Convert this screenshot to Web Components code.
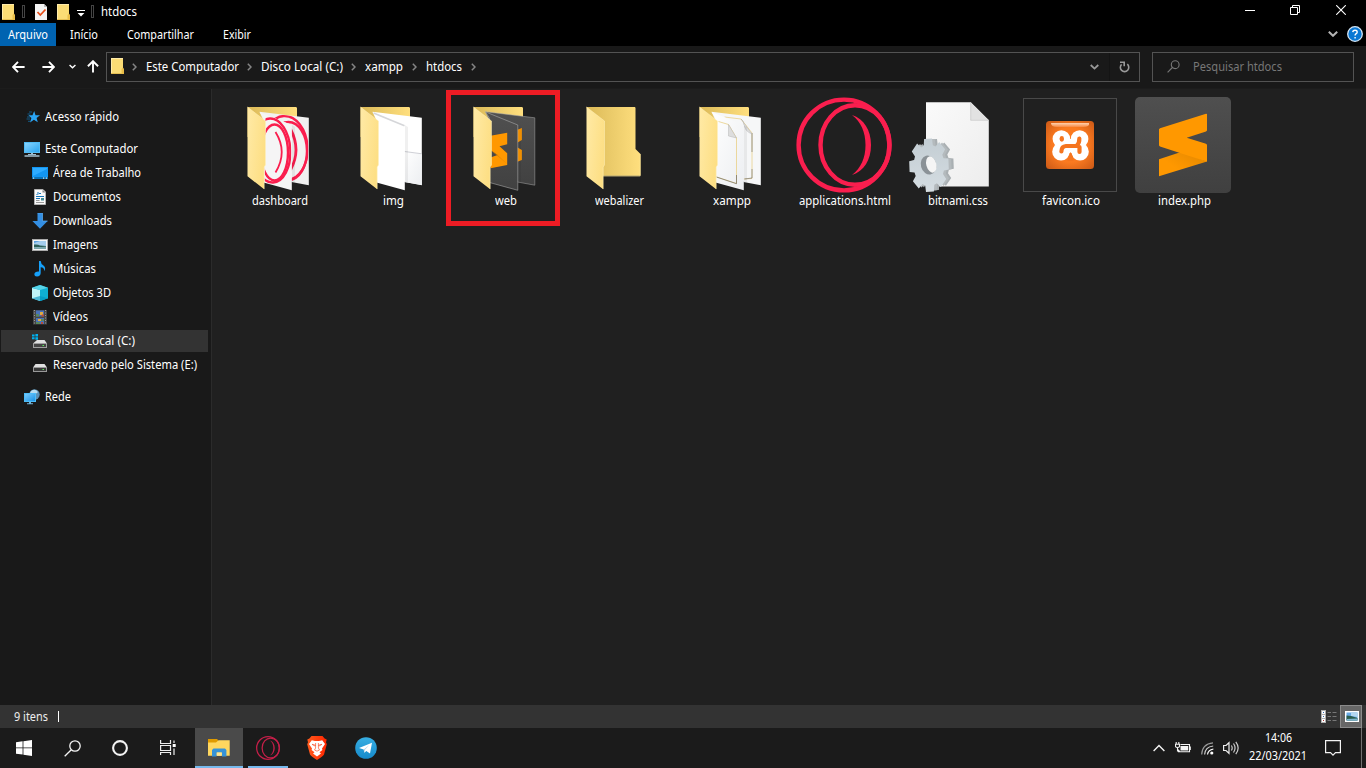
<!DOCTYPE html>
<html lang="pt-BR">
<head>
<meta charset="utf-8">
<title>htdocs</title>
<style>
html,body{margin:0;height:100%;background:#202020;overflow:hidden}
body{font-family:"Noto Sans","Open Sans",sans-serif;font-size:12px;color:#fff}
</style>
</head>
<body>
<desktop-screen></desktop-screen>
<script>
const define = (name, html, setup) => customElements.define(name, class extends HTMLElement {
  connectedCallback() {
    if (this.shadowRoot) return;
    const root = this.attachShadow({mode: 'open'});
    root.innerHTML = typeof html === 'function' ? html(this) : html;
    if (setup) setup(this, root);
  }
});

/* A single line of text condensed to an exact advance width. */
define('text-run', el => `<style>:host{display:block;white-space:nowrap;line-height:16px;height:16px;flex:none;width:${el.getAttribute('w')}px}span{display:inline-block;transform-origin:0 50%}</style><span>${el.getAttribute('t')}</span>`,
  (el, root) => {
    const span = root.querySelector('span');
    const scale = Number(el.getAttribute('w')) / span.getBoundingClientRect().width;
    span.style.transform = `scaleX(${scale.toFixed(4)})`;
  });

const flapDefs = `<defs><linearGradient id="f" x2="1" y2=".4"><stop stop-color="#ffeaa6"/><stop offset="1" stop-color="#fddf85"/></linearGradient><linearGradient id="k" x2="1" y2="0"><stop stop-color="#dcb956"/><stop offset=".4" stop-color="#e9c968"/><stop offset="1" stop-color="#ffdf7e"/></linearGradient><linearGradient id="p" x2="1" y2="1"><stop stop-color="#fff"/><stop offset="1" stop-color="#eceef1"/></linearGradient><linearGradient id="d" x2="0" y2="1"><stop stop-color="#505050"/><stop offset="1" stop-color="#414141"/></linearGradient><clipPath id="cf"><path d="M35 17L61 28V93L34 86Z"/></clipPath><clipPath id="cb"><path d="M29 15L78 21V88L61 85V28Z"/></clipPath></defs><g transform="translate(-.5 0)">`;
const flap = '<path d="M17 10L35 24V68L33.7 70V92.3L17 79.3Z" fill="url(#f)"/><path d="M17 10L35 24V68L33.7 70V92" fill="none" stroke="#fff0bd" stroke-width=".5"/></g>';
const backTop = '<path d="M17 10H65.7L66.5 11V40H17Z" fill="url(#k)"/>';
const pages = (fill, extra = '') => `<path d="M29 14.7L78.3 20.8V88.2L61 85Z" fill="${fill}" ${extra}/>`;
const front = (fill, extra = '') => `<path d="M29 14.9L61.3 28V93.3L33 85.5V21Z" fill="${fill}" ${extra}/>`;
const foldShade = '<path d="M61.3 28L64.5 30V85.6L61.3 85Z" fill="#000" opacity=".06"/>';
const operaPaths = c => `<g fill="none" stroke="${c}" stroke-width="4.4"><circle cx="48" cy="48" r="45.4"/><ellipse cx="59" cy="48" rx="34.5" ry="39.8"/></g><path d="M56 18C68 22 75 33 75 48S68 74 56 78C65 71 69.5 61 69.5 48S65 25 56 18Z" fill="${c}"/>`;

function gear(cx, cy, rx, ry) {
  const pts = [];
  for (let i = 0; i < 8; i++) {
    const a = i * Math.PI / 4 - 1.62;
    for (const [da, r] of [[-.3, .77], [-.2, 1], [.2, 1], [.3, .77]])
      pts.push((cx + rx * r * Math.cos(a + da)).toFixed(1) + ',' + (cy + ry * r * Math.sin(a + da)).toFixed(1));
  }
  return 'M' + pts.join('L') + 'Z';
}

/* [viewBox width, height, markup] */
const ICONS = {
  dashboard: [96, 96, flapDefs + backTop + pages('#f1f1f1') +
    '<g clip-path="url(#cb)" fill="none" stroke="#fa1e4e" stroke-width="2.4"><ellipse cx="55" cy="51" rx="22" ry="32" transform="rotate(-3 55 51)"/><ellipse cx="58" cy="54" rx="18.5" ry="29"/><path d="M60 32Q71 53 60 73" stroke-width="2.8"/></g>' + foldShade + front('#f5f5f5') +
    '<g clip-path="url(#cf)" fill="none" stroke="#fa1e4e" stroke-width="2.4"><ellipse cx="41" cy="53.5" rx="18.8" ry="32" transform="rotate(-3 41 53.5)"/><ellipse cx="44" cy="55.5" rx="13.5" ry="28"/><path d="M45 35Q57.5 55 45 75.5" stroke-width="1.8"/></g>' + flap],
  img: [96, 96, flapDefs + backTop + pages('#fff') + '<path d="M61 54.7L78.3 57V88L61 85Z" fill="url(#p)"/><path d="M61 54.5L78.3 56.8" stroke="#cfd0d6" stroke-width="1"/>' + foldShade + front('#fff') + '<path d="M30 16L61 28.8" stroke="#d5d6d9" stroke-width="1.6"/>' + flap],
  web: [96, 96, flapDefs + backTop + pages('url(#d)', 'stroke="#aaa" stroke-width=".5"') + '<path d="M60.3 33L65.3 31V43L60.3 46ZM60.3 50L65.3 53V63L60.3 65Z" fill="#ff9800"/>' + foldShade + front('url(#d)', 'stroke="#bbb" stroke-width=".5"') + '<path d="M34 38.7L50.7 35.7V47.3L43 49.3L50.7 56.3V68L34 71.3V60.5L41 58L34 53Z" fill="#ff9800"/><path d="M34 53L50.7 67L41 58Z" fill="#d98000"/>' + flap],
  webalizer: [96, 96, flapDefs + '<path d="M17 10H65.5L66 11V52L71 57V78L70.5 78.8H30Z" fill="url(#k)"/><path d="M33.5 79H70.7V57" fill="none" stroke="#fbe59b" stroke-width=".7"/>' + flap],
  xampp: [96, 96, flapDefs + backTop + pages('#f6f7f8') + '<path d="M42 20L58.5 22L69.5 36V81.5L61 82" fill="none" stroke="#ead18b" stroke-width=".8"/><path d="M69.5 36V55M69.5 72V81L62 82" fill="none" stroke="#666" stroke-width=".6"/><path d="M60.5 24Q62 35 69.5 37L58.5 22Z" fill="#ddd" stroke="#aaa" stroke-width=".4"/>' + foldShade + front('url(#p)') + '<path d="M36 24.5L46 27.5L54 41V86.5L34 80" fill="none" stroke="#e9cf86" stroke-width=".8"/><path d="M54 78V86.7L34 80" fill="none" stroke="#555" stroke-width=".6"/><path d="M46 27.5V39L54 41Z" fill="#ddd" stroke="#aaa" stroke-width=".4"/>' + flap],
  opera: [96, 96, operaPaths('#fa1e4e')],
  css: [96, 96, `<defs><linearGradient id="p" x2="1" y2="1"><stop stop-color="#fafafa"/><stop offset="1" stop-color="#ededed"/></linearGradient><linearGradient id="g" x2="0" y2="1"><stop stop-color="#c3cdd3"/><stop offset="1" stop-color="#d5dde2"/></linearGradient></defs><path d="M17 5.3H61.7L79.8 23.3V89.4H17Z" fill="url(#p)"/><path d="M61.7 5.3V23.3H79.8Z" fill="#e2e2e2"/><path d="M61.7 5.3V23.3H79.8" fill="none" stroke="#c9c9c9" stroke-width=".7"/>
    <path d="${gear(25, 67.8, 20, 26)}" fill="#a9afb2"/><path d="${gear(22.8, 68, 20, 26)}" fill="#b4babd"/><path d="${gear(20, 68.3, 20, 27)}" fill="url(#g)"/><ellipse cx="19.5" cy="68" rx="7.6" ry="9.7" fill="#8b9297" transform="rotate(-15 19.5 68)"/><ellipse cx="22.3" cy="67.5" rx="5" ry="8.3" fill="#f5f5f5" transform="rotate(-15 22.3 67.5)"/>`],
  favicon: [96, 96, `<defs><radialGradient id="r" r=".72"><stop offset=".5" stop-color="#fb7a20"/><stop offset="1" stop-color="#c85716"/></radialGradient><linearGradient id="s" x2="0" y2="1"><stop stop-color="#ffd1b0"/><stop offset="1" stop-color="#f98a43"/></linearGradient></defs><rect x="1.5" y="1.5" width="93" height="93" fill="none" stroke="#494949"/><rect x="24" y="24" width="48" height="48" rx="3.5" fill="url(#r)"/><path d="M29 26H67Q68 30 61 30H35Q29 30 29 26Z" fill="url(#s)"/>
    <g fill="#fff"><circle cx="39.4" cy="42" r="8.8"/><circle cx="39" cy="54.8" r="8.8"/><circle cx="57.6" cy="42" r="8.8"/><circle cx="58" cy="54.8" r="8.8"/><path d="M36 42H61V56H36Z"/></g><path d="M48.5 55Q46.5 58 45.5 64H51.5Q51 58 48.5 55Z" fill="#f5751f"/><g fill="none" stroke="#f5751f" stroke-width="4.2" stroke-linecap="round" stroke-linejoin="round"><path d="M39.8 41.2V42.6"/><path d="M39.4 54.5Q39.5 49.3 44 49H54.5Q57.7 46 57.3 41.5M57.5 50V55"/></g>`],
  sublime: [96, 96, `<defs><linearGradient id="d" x2="0" y2="1"><stop stop-color="#4f4f4f"/><stop offset="1" stop-color="#404040"/></linearGradient><linearGradient id="o" x1="1" y1=".1" x2=".3" y2=".6"><stop stop-color="#e48800"/><stop offset="1" stop-color="#ff9800"/></linearGradient></defs><rect width="96" height="96" rx="5" fill="url(#d)"/><path d="M24 62.3L46 55L72 64.5L24 79.3Z" fill="url(#o)"/><path d="M24 32.2L25 31.2L71 16.7L72 17V33.5L71 34.5L51.7 40.7L71 46.7L72 47.7V64.7L25 49.4L24 48.4Z" fill="#ff9800"/>`],
  folder: [13, 16, '<path d="M0 0H12V10L13 11.5V16H0Z" fill="#fbdc75"/><path d="M10.5 15.5V11L12 9.5L13 11.5V16H10.5Z" fill="#e9bd48"/><path d="M0 .5H12M.5 0V16" stroke="#ffebaa" fill="none"/><path d="M0 15.5H11" stroke="#e5bf53"/>'],
  check: [12, 16, '<path d="M0 0H9L12 3V16H0Z" fill="#f4f4f4"/><path d="M9 0V3H12Z" fill="#bbb"/><path d="M2.5 8L5.3 11L10.5 5.5" fill="none" stroke="#e8501c" stroke-width="1.8"/>'],
  qat: [8, 7, '<path d="M0 .5H8" stroke="#fff"/><path d="M.6 3H7.4L4 6.5Z" fill="#fff"/>'],
  grip: [3, 13, '<rect x=".5" y=".5" width="2" height="12" fill="none" stroke="#454545"/>'],
  min: [10, 10, '<path d="M0 5.5H10" stroke="#fff"/>'],
  restore: [10, 10, '<path d="M.5 2.5H7.5V9.5H.5ZM2.5 2.5V.5H9.5V7.5H7.5" fill="none" stroke="#fff"/>'],
  close: [10, 10, '<path d="M.2 .2L9.8 9.8M9.8 .2L.2 9.8" stroke="#fff" stroke-width="1.1"/>'],
  down: [10, 6, '<path d="M.8 .8L5 4.8L9.2 .8" fill="none" stroke="currentColor" stroke-width="2"/>'],
  help: [16, 16, '<circle cx="8" cy="8" r="7.3" fill="#0a78d4" stroke="#d5e6f5" stroke-width="1.3"/><path d="M5.8 6.1Q5.9 4.2 8 4.2T10.2 6Q10.2 7.2 8.9 7.9Q8.1 8.5 8.1 9.5M8.1 11V12.5" fill="none" stroke="#fff" stroke-width="1.4"/>'],
  back: [13, 12, '<path d="M12.6 6H1M6 .9L1 6L6 11.1" fill="none" stroke="#fff" stroke-width="1.9"/>'],
  fwd: [13, 12, '<path d="M.4 6H12M7 .9L12 6L7 11.1" fill="none" stroke="#fff" stroke-width="1.9"/>'],
  up: [12, 13, '<path d="M6 12.6V1.2M.9 6.2L6 1.2L11.1 6.2" fill="none" stroke="#fff" stroke-width="1.9"/>'],
  crumb: [5, 8, '<path d="M.8 .8L4 4L.8 7.2" fill="none" stroke="#858585" stroke-width="1.5"/>'],
  refresh: [11, 12, '<path d="M8.3 3.2A4.2 4.2 0 1 1 2.6 3.4M1 1.2H5.2V5.2" fill="none" stroke="#999" stroke-width="1.6"/>'],
  glass: [13, 13, '<circle cx="8.2" cy="4.7" r="3.9" fill="none" stroke="#777" stroke-width="1.1"/><path d="M5.4 7.5L.6 12.4" stroke="#777" stroke-width="1.1"/>'],
  star: [16, 16, '<path d="M10.2 2L11.5 6.3H16L12.6 9L13.8 13.2L9.9 10.8L6 13.6L7.4 9L4.4 6.3H8.5Z" fill="#2aa5f5"/><path d="M5 3H8M3.5 5H6.5M3 8H6M2.5 10H6M4 12.3H6" stroke="#135b88" stroke-width="1"/>'],
  pc: [16, 16, '<defs><linearGradient id="b" x2="1" y2="1"><stop stop-color="#8bd6ff"/><stop offset="1" stop-color="#27a3ef"/></linearGradient></defs><rect x=".5" y="1.5" width="15" height="10" fill="url(#b)" stroke="#52bcf5"/><path d="M7 12H9V13H12V14H4V13H7Z" fill="#9dbccf"/><path d="M.5 15H15.5" stroke="#a6c2d2" stroke-width="1.5"/>'],
  desk: [16, 16, '<rect y="2" width="16" height="12" fill="#1296f3"/><path d="M1 11L15 4V3H1Z" fill="#2eabff"/><path d="M0 13H16" stroke="#08649e" stroke-width="1.4"/><path d="M1 13.1H2.2M11 13.1H12.2M13.8 13.1H15" stroke="#fff"/>'],
  doc: [16, 16, '<path d="M2.5 .5H11L13.5 3V15.5H2.5Z" fill="#fafafa" stroke="#b3b3b3"/><path d="M10.5 1V3.5H13.5Z" fill="#888"/><path d="M4.5 5.5H5.5M6 3V5.5M7 4.5H9M4 7.5H12M4 9.5H8" stroke="#1475ba"/><path d="M9 9H12V11.5H9Z" fill="#438b93"/><path d="M4 11.5H7.5M4 13.5H12" stroke="#999"/>'],
  dl: [16, 16, '<path d="M5.5 0H10.5V8H15.6L8 15.8L.4 8H5.5Z" fill="#348fe3"/><path d="M5.5 0H10.5V8H15.6" fill="none" stroke="#5cb0f5" stroke-width=".7"/>'],
  pic: [16, 16, '<rect x=".5" y="2.5" width="15" height="11" fill="#f5f5f5" stroke="#aaa"/><rect x="2" y="4" width="12" height="8" fill="#a5cdec"/><path d="M2 4H8L2 6Z" fill="#5b9fde"/><path d="M2 7.5Q6 7 8 8.5L14 9V10H2Z" fill="#2c5f57"/><path d="M2 10Q8 10.5 14 9.5V12H2Z" fill="#7ba6aa"/>'],
  music: [16, 16, '<path d="M7 0H8.7Q9 3.4 11.5 4.6Q14.4 6.8 12.2 10.2Q12.4 6.5 8.7 6.3V12Q8.5 15.4 5 15.6Q2.3 15.3 2.3 13.2Q2.8 10.2 7 10.5Z" fill="#16a0f9"/>'],
  cube: [16, 16, '<path d="M0 2.7L8 0L16 2.7V13.3L8 16L0 13.3Z" fill="#19a9cc"/><path d="M0 3L8 5V16L0 13.3Z" fill="#bff3f7"/><path d="M16 3L8 5V16L16 13.3Z" fill="#0eaed3"/><path d="M0 2.7L8 0L16 2.7L8 5Z" fill="#57d4e8"/><path d="M8 11L0 13.3L8 16L16 13.3Z" fill="#008fbc" opacity=".6"/>'],
  film: [16, 16, '<rect x="1" y="1" width="14" height="14.5" fill="#474747"/><path d="M2.5 1V16M13.5 1V16" stroke="#999" stroke-dasharray="1 1.5"/><rect x="4" y="1.5" width="8" height="6" fill="#4971b9"/><rect x="4" y="9" width="8" height="6" fill="#4971b9"/><path d="M4 5H7V7.5H4M4 13H8V15H4M9 10H12V12H9" fill="#58865b"/><path d="M8 3H11V6H8M6 10H9V12H6" fill="#e0aa42"/><path d="M10 5.5H12V7.5H9M9 13H11V15H9" fill="#b54c39"/>'],
  disk: [16, 16, '<path d="M3.5 7H12.5L15 10.5H1Z" fill="#e0e0e0"/><rect x="1" y="10" width="14" height="5" fill="#989898"/><rect x="2" y="11" width="12" height="3" fill="#383838"/><path d="M10.5 12.5H12" stroke="#59ef58" stroke-width="1.2"/>'],
  diskc: [16, 16, '<path d="M5 7H12.5L15 10.5H1Z" fill="#e0e0e0"/><rect x="1" y="10" width="14" height="5" fill="#a0a0a0"/><rect x="2" y="11" width="12" height="3" fill="#454545"/><path d="M10.5 12.5H12" stroke="#59ef58" stroke-width="1.2"/><path d="M0 1.5H2.6V3.5H0ZM3.4 1H6V3.5H3.4ZM0 4.3H2.6V6.3H0ZM3.4 4.3H6V6.8H3.4Z" fill="#00b2f1"/>'],
  net: [16, 16, '<defs><linearGradient id="b" x2="1" y2="1"><stop stop-color="#7dceff"/><stop offset="1" stop-color="#168fe2"/></linearGradient></defs><circle cx="10.5" cy="5.5" r="5.2" fill="#5c91b6"/><path d="M7 2Q11 -1 14 3Q12 6 9 4Q7 6 6 4Z" fill="#b9dcef"/><rect x=".5" y="4.5" width="11" height="8" fill="url(#b)" stroke="#4dbdf9"/><path d="M5 13H7V14.2H9V15.2H3V14.2H5Z" fill="#72b5db"/>'],
  win: [16, 16, '<path d="M0 2.2L6.6 1.3V7.5H0ZM7.4 1.2L16 0V7.5H7.4ZM0 8.3H6.6V14.6L0 13.7ZM7.4 8.3H16V16L7.4 14.8Z" fill="#fff"/>'],
  search: [17, 17, '<circle cx="11" cy="6" r="5.2" fill="none" stroke="#f5f5f5" stroke-width="1.3"/><path d="M7.3 9.7L.7 16.3" stroke="#f5f5f5" stroke-width="1.3"/>'],
  cortana: [16, 16, '<circle cx="8" cy="8" r="6.9" fill="none" stroke="#f3f3f3" stroke-width="2.1"/>'],
  task: [16, 16, '<path d="M.6 0V3.5H10.5V0M.6 15V12.5H10.5V15M.6 5.5V10.5H10.5V5.5ZM14 .5V3M14 8.5V15" fill="none" stroke="#eee" stroke-width="1.2"/><rect x="12.7" y="4" width="3" height="3" fill="#fff"/>'],
  explorer: [22, 18, '<path d="M0 0H9L10 1V4H0Z" fill="#e09b00"/><path d="M0 3.5H8L10.5 1.2H21.7V16.8H0Z" fill="#ffd75f"/><path d="M4 17.6V11L5.5 9.5H17L18.4 11V17.6H14V13.5H8.5V17.6Z" fill="#3693d8"/><path d="M9 13.5H13.6V16.8H9Z" fill="#ffe695"/>'],
  operataskbar: [96, 96, operaPaths('#c51f49').replace('stroke-width="4.4"', 'stroke-width="5"')],
  brave: [20, 24, '<defs><linearGradient id="b" x2="1" y2="0"><stop stop-color="#ff5b1d"/><stop offset="1" stop-color="#ff2500"/></linearGradient></defs><path d="M4.5 0H15.5L17.6 2.4L19.7 3.5L19 6.3L19.8 8.3L17 18.4Q16 20.3 10 24Q4 20.3 3 18.4L.2 8.3L1 6.3L.3 3.5L2.4 2.4Z" fill="url(#b)"/><path d="M4.8 4.3L8 5H12L15.2 4.3L18 8L15 12.4L15.4 14L12.5 16.2L14 17.5L10 20.6L6 17.5L7.5 16.2L4.6 14L5 12.4L2 8Z" fill="#fff"/><path d="M5 8.3L8.4 9.2L7.8 10ZM15 8.3L11.6 9.2L12.2 10ZM8.6 7V12L7.5 14L10 15.2L12.5 14L11.4 12V7" fill="none" stroke="#f8522d" stroke-width=".7"/><path d="M7.5 17L10 15.8L12.5 17L10 18.7Z" fill="#fff"/>'],
  telegram: [22, 22, '<defs><linearGradient id="b" x2="0" y2="1"><stop stop-color="#37aee2"/><stop offset="1" stop-color="#168acb"/></linearGradient></defs><circle cx="11" cy="11" r="10.8" fill="url(#b)"/><path d="M4 11L17 5.7L15 16.5L11.3 14L9.4 15.8L8.7 12.6Z" fill="#fff"/><path d="M8.7 12.6L14.3 8L10 12.8L9.4 15.8Z" fill="#b6d5e9"/>'],
  trayup: [12, 8, '<path d="M.6 7L6 1.5L11.4 7" fill="none" stroke="#f3f3f3" stroke-width="1.4"/>'],
  battery: [16, 12, '<path d="M5.5 2.5H14.5V9.8H3.5V7.5M15.3 4.5V8M1.2 0V2M3.8 0V2M.5 2.3H4.5V4.5Q4 5.5 2.5 5.5Q1 5.5 .5 4.5ZM2.5 5V9H5" fill="none" stroke="#f3f3f3" stroke-width="1.1"/><rect x="5.5" y="4" width="7.7" height="4.5" fill="#f3f3f3"/>'],
  wifi: [13, 13, '<g fill="none" stroke="#999" stroke-width="1.2"><path d="M.7 12.5Q1 2 12 .8"/><path d="M3.6 12.5Q4 5 12.2 4" stroke="#ccc"/><path d="M6.5 12.5Q7 8 12.4 7" stroke="#fff"/></g><circle cx="10.8" cy="11" r="1.6" fill="#fff"/>'],
  volume: [17, 14, '<path d="M.6 4.5H3L6 1.7V12.3L3 9.5H.6Z" fill="none" stroke="#eee" stroke-width="1.2"/><path d="M8.4 4.5Q10 7 8.4 9.5M10.5 2.5Q13.6 7 10.5 11.5M12.8 .8Q17.5 7 12.8 13.2" fill="none" stroke="#ccc" stroke-width="1.2"/>'],
  note: [16, 16, '<path d="M.6 .6H15.4V12.6H10.5L8 15.1L5.5 12.6H.6Z" fill="none" stroke="#f3f3f3" stroke-width="1.2"/>'],
  details: [16, 13, '<path d="M0 0H5V13H0Z" fill="#b0b0b0"/><path d="M1 1H4V4H1ZM1 5H4V8H1ZM1 9H4V12H1Z" fill="#fff"/><path d="M2 2H3V3H2ZM2 6H3V7H2Z" fill="#376db0"/><path d="M2 10H3V11H2Z" fill="#a33"/><path d="M6.5 2.5H10M11.5 2.5H15.5M6.5 6.5H10M11.5 6.5H15.5M6.5 10.5H10M11.5 10.5H15.5" stroke="#777"/>'],
  large: [14, 11, '<rect width="14" height="11" fill="#fff"/><rect x="1.5" y="1.5" width="11" height="8" fill="#67a9e5"/><path d="M6 1.5H12.5V6L6 5Z" fill="#b4d8f2"/><path d="M1.5 4.5L6 5L12.5 7V9.5H1.5Z" fill="#2b5e4e"/><path d="M2 8L12.5 7.5V9.5H2Z" fill="#7fb6cf"/>']
};

define('ui-icon', el => {
  const [w, h, body] = ICONS[el.getAttribute('name')];
  const width = el.getAttribute('w') || w, height = el.getAttribute('h') || h;
  return `<style>:host{display:block;flex:none;width:${width}px;height:${height}px}svg{display:block}</style><svg width="${width}" height="${height}" viewBox="0 0 ${w} ${h}">${body}</svg>`;
});

define('title-bar', `<style>:host{display:flex;height:23px;background:#000;align-items:center;justify-content:space-between}
.l,.r{display:flex;align-items:center}.l{padding-left:2px}.l ui-icon{margin-right:7px}.r{gap:36px;padding:0 20px 3px 0}</style>
<div class="l"><ui-icon name="folder"></ui-icon><ui-icon name="grip" style="margin-right:10px"></ui-icon><ui-icon name="check" style="margin-right:10px"></ui-icon><ui-icon name="folder"></ui-icon><ui-icon name="qat" style="margin:3px 6px 0 0"></ui-icon><ui-icon name="grip"></ui-icon><text-run t="htdocs" w="36"></text-run></div>
<div class="r"><ui-icon name="min" style="margin-right:-1px"></ui-icon><ui-icon name="restore"></ui-icon><ui-icon name="close"></ui-icon></div>`);

define('ribbon-tabs', `<style>:host{display:flex;height:23px;background:#000;align-items:center}
.a{background:#0063b1;height:23px;display:flex;align-items:center;width:48px;padding-left:8px;margin-right:14px}text-run{margin-right:29px}.a text-run{margin:0}.r{margin-left:auto;display:flex;align-items:center;gap:9px;padding:0 3px 1px 0;color:#b4b4b4}</style>
<div class="a"><text-run t="Arquivo" w="40"></text-run></div><text-run t="Início" w="28"></text-run><text-run t="Compartilhar" w="67"></text-run><text-run t="Exibir" w="28"></text-run>
<div class="r"><ui-icon name="down"></ui-icon><ui-icon name="help"></ui-icon></div>`);

define('address-bar', `<style>:host{display:flex;height:43px;box-sizing:border-box;background:#191919;align-items:center;padding:0 12px 1px 12px;border-bottom:1px solid #1c1c1c}
.nav{display:flex;align-items:center;width:94px}.box{box-sizing:border-box;height:30px;border:1px solid #535353;display:flex;align-items:center}
.path{width:1034px;padding-left:4px}.find{width:202px;margin-left:12px;padding-left:14px;gap:13px;color:#777}.end{margin-left:auto;display:flex;align-items:center;color:#999}.re{border-left:1px solid #141414;height:28px;width:29px;display:flex;align-items:center;justify-content:center}</style>
<div class="nav"><ui-icon name="back"></ui-icon><ui-icon name="fwd" style="margin-left:17px"></ui-icon><ui-icon name="down" w="7" h="5" style="margin-left:14px"></ui-icon><ui-icon name="up" style="margin-left:11px"></ui-icon></div>
<div class="box path"><ui-icon name="folder" style="margin-bottom:2px"></ui-icon><ui-icon name="crumb" style="margin:0 9px 0 8px"></ui-icon><text-run t="Este Computador" w="93"></text-run><ui-icon name="crumb" style="margin:0 9px 0 8px"></ui-icon><text-run t="Disco Local (C:)" w="82"></text-run><ui-icon name="crumb" style="margin:0 9px 0 8px"></ui-icon><text-run t="xampp" w="38"></text-run><ui-icon name="crumb" style="margin:0 9px"></ui-icon><text-run t="htdocs" w="36"></text-run><ui-icon name="crumb" style="margin-left:9px"></ui-icon>
<div class="end"><ui-icon name="down" w="9" h="6" style="margin-right:10px"></ui-icon><div class="re"><ui-icon name="refresh"></ui-icon></div></div></div>
<div class="box find"><ui-icon name="glass"></ui-icon><text-run t="Pesquisar htdocs" w="89"></text-run></div>`);

define('nav-item', el => `<style>:host{display:flex;align-items:center;box-sizing:border-box;height:24px;border:solid transparent;border-width:1px 2px 1px 1px;background-clip:padding-box;padding-left:${el.hasAttribute('root') ? 23 : 31}px;gap:5px}:host([selected]){background-color:#333}:host([gap]){margin-bottom:8px}</style><ui-icon name="${el.getAttribute('icon')}"></ui-icon><text-run t="${el.getAttribute('t')}" w="${el.getAttribute('w')}"></text-run>`);

define('nav-pane', `<style>:host{display:block;box-sizing:border-box;width:212px;background:#191919;border-right:1px solid #2b2b2b;padding:16px 1px 0 0}</style>
<nav-item root gap icon="star" t="Acesso rápido" w="74"></nav-item><nav-item root icon="pc" t="Este Computador" w="93"></nav-item>
<nav-item icon="desk" t="Área de Trabalho" w="88"></nav-item><nav-item icon="doc" t="Documentos" w="68"></nav-item><nav-item icon="dl" t="Downloads" w="59"></nav-item><nav-item icon="pic" t="Imagens" w="45"></nav-item><nav-item icon="music" t="Músicas" w="43"></nav-item><nav-item icon="cube" t="Objetos 3D" w="58"></nav-item><nav-item icon="film" t="Vídeos" w="35"></nav-item><nav-item selected icon="diskc" t="Disco Local (C:)" w="82"></nav-item><nav-item gap icon="disk" t="Reservado pelo Sistema (E:)" w="144"></nav-item><nav-item root icon="net" t="Rede" w="26"></nav-item>`);

define('file-tile', el => `<style>:host{display:flex;flex-direction:column;align-items:center;width:96px;position:relative}text-run{margin-left:2px}
:host([marked])::after{content:"";position:absolute;left:-11px;top:-7px;width:104px;height:126px;border:5px solid #ed1c24}</style><ui-icon name="${el.getAttribute('icon')}"></ui-icon><text-run t="${el.getAttribute('t')}" w="${el.getAttribute('w')}"></text-run>`);

define('file-grid', `<style>:host{display:flex;align-items:flex-start;gap:17px;flex:1;background:#202020;padding:8px 0 0 19px}</style>
<file-tile icon="dashboard" t="dashboard" w="56"></file-tile><file-tile icon="img" t="img" w="21"></file-tile><file-tile marked icon="web" t="web" w="22"></file-tile><file-tile icon="webalizer" t="webalizer" w="49"></file-tile><file-tile icon="xampp" t="xampp" w="38"></file-tile><file-tile icon="opera" t="applications.html" w="92"></file-tile><file-tile icon="css" t="bitnami.css" w="60"></file-tile><file-tile icon="favicon" t="favicon.ico" w="58"></file-tile><file-tile icon="sublime" t="index.php" w="53"></file-tile>`);

define('status-bar', `<style>:host{display:flex;height:23px;background:#333;align-items:center;padding-left:14px;color:#eee}.c{width:1px;height:11px;background:#fff;margin-left:10px}.v{display:flex;margin-left:auto;align-items:center;gap:3px;padding-right:4px}.b{box-sizing:border-box;width:22px;height:23px;background:#676767;border:1px solid #8b8b8b;display:flex;align-items:center;justify-content:flex-end;padding-right:2px}</style>
<text-run t="9 itens" w="34"></text-run><div class="c"></div><div class="v"><ui-icon name="details" style="margin-bottom:1px"></ui-icon><div class="b"><ui-icon name="large"></ui-icon></div></div>`);

define('task-bar', `<style>:host{display:flex;height:40px;background:#1b1b1b}.s{width:48px;height:40px;display:flex;align-items:center;justify-content:center;box-sizing:border-box;margin-right:1px}.n{margin:0}.on{background:#4a4a4a;border-bottom:2px solid #76b9ed;padding-top:2px}.run{position:relative}.run::after{content:"";position:absolute;left:4px;right:4px;bottom:0;height:2px;background:#76b9ed}
.tray{margin-left:auto;display:flex;align-items:center;padding-right:4px;height:40px}.clock{display:flex;flex-direction:column;align-items:center;width:58px;gap:2px;margin:0 18px 2px 9px}.end{width:1px;height:40px;background:#707070;margin-left:20px}</style>
<div class="s n"><ui-icon name="win"></ui-icon></div><div class="s n"><ui-icon name="search"></ui-icon></div><div class="s n"><ui-icon name="cortana"></ui-icon></div><div class="s n" style="margin-right:3px"><ui-icon name="task"></ui-icon></div>
<div class="s on"><ui-icon name="explorer"></ui-icon></div><div class="s run"><ui-icon name="operataskbar" w="24" h="24"></ui-icon></div><div class="s"><ui-icon name="brave"></ui-icon></div><div class="s"><ui-icon name="telegram"></ui-icon></div>
<div class="tray"><ui-icon name="trayup"></ui-icon><ui-icon name="battery" style="margin-left:10px"></ui-icon><ui-icon name="wifi" style="margin-left:10px"></ui-icon><ui-icon name="volume" style="margin-left:9px"></ui-icon><div class="clock"><text-run t="14:06" w="27"></text-run><text-run t="22/03/2021" w="58"></text-run></div><ui-icon name="note"></ui-icon><div class="end"></div></div>`);

define('desktop-screen', `<style>:host{display:flex;flex-direction:column;width:1366px;height:768px}.m{display:flex;flex:1;min-height:0}</style>
<title-bar></title-bar><ribbon-tabs></ribbon-tabs><address-bar></address-bar><div class="m"><nav-pane></nav-pane><file-grid></file-grid></div><status-bar></status-bar><task-bar></task-bar>`);
</script>
</body>
</html>
